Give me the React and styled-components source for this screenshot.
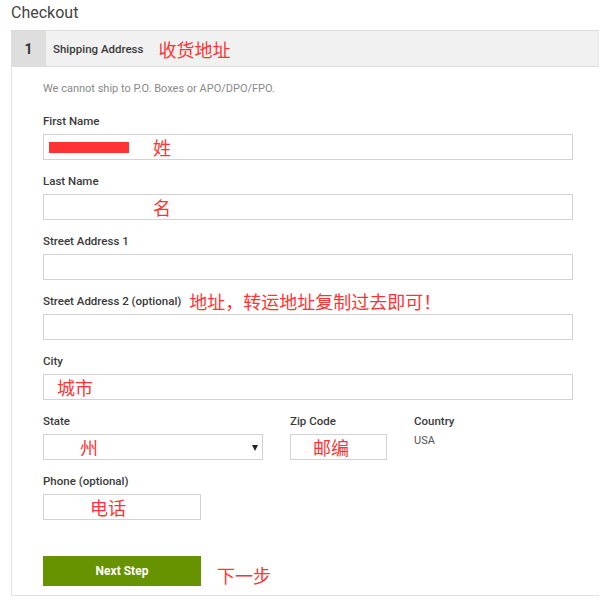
import React from "react";
import styled, { createGlobalStyle } from "styled-components";

const GlobalStyle = createGlobalStyle`
  html, body {
    margin: 0;
    padding: 0;
    background: #fff;
  }
  body {
    font-family: Roboto, "Liberation Sans", "Noto Sans CJK SC", sans-serif;
    color: #333;
  }
`;

const Page = styled.div`
  padding: 3px 0 0 11px;
  width: 600px;
  box-sizing: border-box;
`;

const Title = styled.h1`
  margin: 0;
  font-size: 16px;
  line-height: 19px;
  font-weight: 400;
  color: #444;
`;

const Card = styled.section`
  margin-top: 8px;
  width: 588px;
  border-left: 1px solid #e2e2e2;
  border-bottom: 1px solid #e2e2e2;
  box-sizing: border-box;
`;

const StepHeader = styled.div`
  display: flex;
  align-items: stretch;
  height: 37px;
  margin-left: -1px;
  background: #f1f1f1;
  border-top: 1px solid #dcdcdc;
  border-bottom: 1px solid #dcdcdc;
  border-right: 1px solid #e8e8e8;
  box-sizing: border-box;
`;

const StepNum = styled.div`
  width: 35px;
  display: flex;
  align-items: center;
  justify-content: center;
  background: #dedede;
  font-size: 14px;
  font-weight: 700;
  color: #333;
`;

const StepTitle = styled.div`
  display: flex;
  align-items: center;
  padding-left: 7px;
  font-size: 11.5px;
  font-weight: 500;
  color: #3a3a3a;
`;

const Note = styled.span`
  font-family: "Noto Sans CJK SC", sans-serif;
  font-size: 18px;
  font-weight: 400;
  color: #ff3333;
  margin-left: ${(p) => p.gap || 0}px;
  margin-top: ${(p) => p.drop || 0}px;
  line-height: 1;
  white-space: nowrap;
`;

const Body = styled.div`
  padding: 15px 26px 9px 31px;
`;

const Hint = styled.p`
  margin: 0 0 18px;
  font-size: 11px;
  line-height: 14px;
  color: #8a8a8a;
`;

const Field = styled.div`
  margin-bottom: 14px;
  width: ${(p) => (p.w ? `${p.w}px` : "auto")};
`;

const Label = styled.label`
  display: flex;
  align-items: center;
  height: 14px;
  margin-bottom: 6px;
  font-size: 11.5px;
  font-weight: 500;
  color: #3a3a3a;
  white-space: nowrap;
`;

const Input = styled.div`
  position: relative;
  display: flex;
  align-items: center;
  height: 26px;
  width: ${(p) => (p.w ? `${p.w}px` : "100%")};
  padding-left: ${(p) => p.pl || 0}px;
  border: 1px solid #d2d2d2;
  box-sizing: border-box;
  background: #fff;
`;

const RedBar = styled.div`
  width: 80px;
  height: 11px;
  background: #ff3333;
`;

const Arrow = styled.span`
  position: absolute;
  right: 4px;
  top: 10px;
  width: 0;
  height: 0;
  border-left: 3px solid transparent;
  border-right: 3px solid transparent;
  border-top: 6px solid #222;
`;

const Row = styled.div`
  display: flex;
  gap: 27px;
`;

const Value = styled.div`
  font-size: 11px;
  line-height: 14px;
  color: #555;
`;

const Actions = styled.div`
  display: flex;
  align-items: center;
  margin-top: 36px;
`;

const NextButton = styled.button`
  width: 158px;
  height: 30px;
  border: none;
  background: #679300;
  color: #fff;
  font-family: Roboto, "Liberation Sans", sans-serif;
  font-size: 12px;
  font-weight: 700;
  cursor: pointer;
`;

export default function App() {
  return (
    <Page>
      <GlobalStyle />
      <Title>Checkout</Title>
      <Card>
        <StepHeader>
          <StepNum>1</StepNum>
          <StepTitle>
            Shipping Address
            <Note gap={15}>收货地址</Note>
          </StepTitle>
        </StepHeader>
        <Body>
          <Hint>We cannot ship to P.O. Boxes or APO/DPO/FPO.</Hint>

          <Field>
            <Label>First Name</Label>
            <Input pl={5}>
              <RedBar />
              <Note gap={24}>姓</Note>
            </Input>
          </Field>

          <Field>
            <Label>Last Name</Label>
            <Input pl={109}>
              <Note>名</Note>
            </Input>
          </Field>

          <Field>
            <Label>Street Address 1</Label>
            <Input />
          </Field>

          <Field>
            <Label>
              Street Address 2 (optional)
              <Note gap={8}>地址，转运地址复制过去即可！</Note>
            </Label>
            <Input />
          </Field>

          <Field>
            <Label>City</Label>
            <Input pl={13}>
              <Note>城市</Note>
            </Input>
          </Field>

          <Row>
            <Field w={220}>
              <Label>State</Label>
              <Input pl={36}>
                <Note>州</Note>
                <Arrow />
              </Input>
            </Field>
            <Field w={97}>
              <Label>Zip Code</Label>
              <Input pl={22}>
                <Note>邮编</Note>
              </Input>
            </Field>
            <Field>
              <Label>Country</Label>
              <Value>USA</Value>
            </Field>
          </Row>

          <Field>
            <Label>Phone (optional)</Label>
            <Input w={158} pl={46}>
              <Note>电话</Note>
            </Input>
          </Field>

          <Actions>
            <NextButton>Next Step</NextButton>
            <Note gap={16} drop={8}>
              下一步
            </Note>
          </Actions>
        </Body>
      </Card>
    </Page>
  );
}
